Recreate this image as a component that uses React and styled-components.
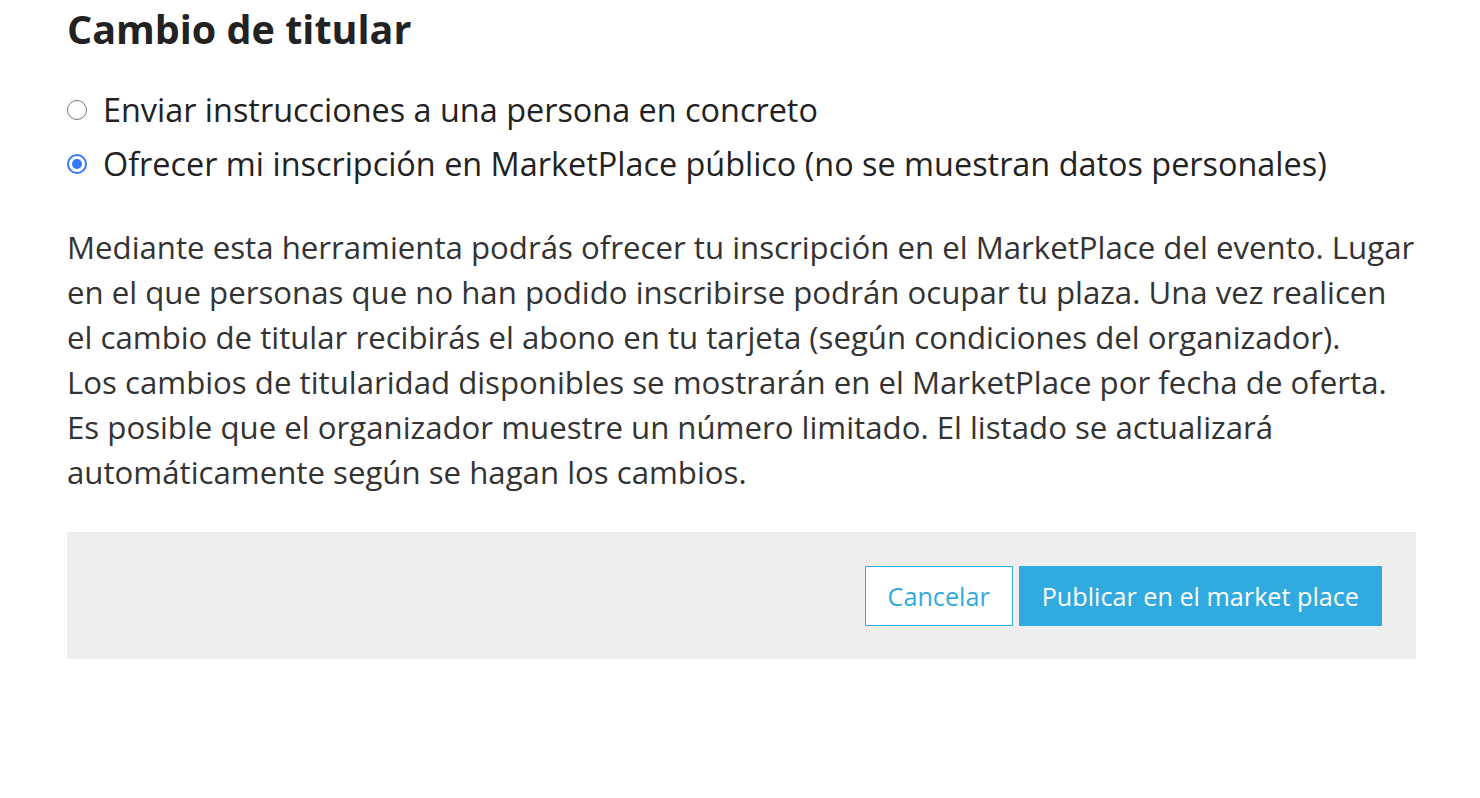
import React, { useState } from 'react'
import styled, { createGlobalStyle } from 'styled-components'

const GlobalStyle = createGlobalStyle`
  body {
    margin: 0;
    background: #ffffff;
    font-family: "Open Sans", "Noto Sans", sans-serif;
  }
`;

const Page = styled.div`
  padding: 0 64px 0 67px;
  width: 1349px;
`;

const Title = styled.h2`
  margin: 0;
  padding-top: 3px;
  font-size: 39.5px;
  font-weight: 700;
  line-height: 52px;
  color: #222222;
`;

const Options = styled.div`
  display: flex;
  flex-direction: column;
  gap: 11px;
  margin-top: 33px;
`;

const OptionRow = styled.label`
  display: flex;
  flex-direction: row;
  align-items: center;
  gap: 16px;
  cursor: pointer;
`;

const RadioDot = styled.span`
  box-sizing: border-box;
  width: 20px;
  height: 20px;
  border-radius: 50%;
  border: ${p => (p.checked ? '2px solid #3478f6' : '1.5px solid #767676')};
  display: flex;
  align-items: center;
  justify-content: center;
  background: #ffffff;
  &::after {
    content: '';
    width: 10px;
    height: 10px;
    border-radius: 50%;
    background: ${p => (p.checked ? '#3478f6' : 'transparent')};
  }
`;

const OptionLabel = styled.span`
  font-size: 32.4px;
  line-height: 43px;
  color: #222222;
`;

const Description = styled.p`
  margin: 40px 0 0;
  font-size: 31.2px;
  font-weight: 400;
  line-height: 45px;
  color: #333333;
  white-space: nowrap;
`;

const Footer = styled.div`
  margin-top: 37px;
  background: #eeeeee;
  display: flex;
  flex-direction: row;
  justify-content: flex-end;
  gap: 6px;
  padding: 34px 34px 33px;
`;

const Button = styled.button`
  box-sizing: border-box;
  height: 60px;
  padding: 0 22px;
  font-family: "Open Sans", "Noto Sans", sans-serif;
  font-size: 25.2px;
  border: 1px solid #30aadf;
  background: ${p => (p.primary ? '#30aadf' : '#ffffff')};
  color: ${p => (p.primary ? '#ffffff' : '#30aadf')};
  cursor: pointer;
`;

const options = [
  'Enviar instrucciones a una persona en concreto',
  'Ofrecer mi inscripción en MarketPlace público (no se muestran datos personales)',
];

const lines = [
  'Mediante esta herramienta podrás ofrecer tu inscripción en el MarketPlace del evento. Lugar',
  'en el que personas que no han podido inscribirse podrán ocupar tu plaza. Una vez realicen',
  'el cambio de titular recibirás el abono en tu tarjeta (según condiciones del organizador).',
  'Los cambios de titularidad disponibles se mostrarán en el MarketPlace por fecha de oferta.',
  'Es posible que el organizador muestre un número limitado. El listado se actualizará',
  'automáticamente según se hagan los cambios.',
];

export default function App() {
  const [selected, setSelected] = useState(1);
  return (
    <>
      <GlobalStyle />
      <Page>
        <Title>Cambio de titular</Title>
        <Options>
          {options.map((text, i) => (
            <OptionRow key={i} onClick={() => setSelected(i)}>
              <RadioDot checked={selected === i} />
              <OptionLabel>{text}</OptionLabel>
            </OptionRow>
          ))}
        </Options>
        <Description>
          {lines.map((l, i) => (
            <React.Fragment key={i}>
              {l}
              {i < lines.length - 1 && <br />}
            </React.Fragment>
          ))}
        </Description>
        <Footer>
          <Button>Cancelar</Button>
          <Button primary>Publicar en el market place</Button>
        </Footer>
      </Page>
    </>
  )
}
